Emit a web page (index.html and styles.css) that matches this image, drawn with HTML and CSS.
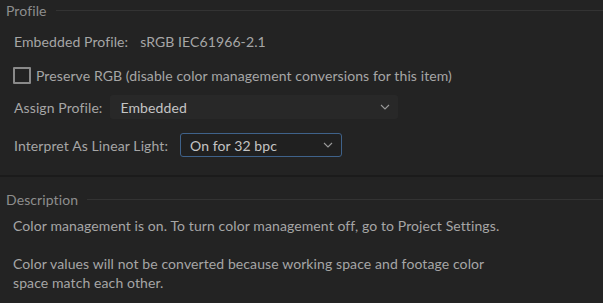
FILE: index.html
```html
<!DOCTYPE html>
<html lang="en">
<head>
  <meta charset="UTF-8">
  <title>Interpret Footage - Color</title>
  <link rel="stylesheet" href="styles.css">
</head>
<body>
  <section class="group profile">
    <div class="group-title">
      <span>Profile</span>
      <div class="rule"></div>
    </div>

    <div class="row info">
      <span class="label">Embedded Profile:</span>
      <span class="value">sRGB IEC61966-2.1</span>
    </div>

    <label class="row check">
      <span class="box"></span>
      <span>Preserve RGB (disable color management conversions for this item)</span>
    </label>

    <div class="row field">
      <span class="label">Assign Profile:</span>
      <div class="select wide">
        <span>Embedded</span>
        <svg class="chevron" width="10" height="6" viewBox="0 0 10 6"><path d="M1 1 L5 5 L9 1" fill="none" stroke="#9a9a9a" stroke-width="1.1"/></svg>
      </div>
    </div>

    <div class="row field">
      <span class="label">Interpret As Linear Light:</span>
      <div class="select narrow focused">
        <span>On for 32 bpc</span>
        <svg class="chevron" width="10" height="6" viewBox="0 0 10 6"><path d="M1 1 L5 5 L9 1" fill="none" stroke="#9a9a9a" stroke-width="1.1"/></svg>
      </div>
    </div>
  </section>

  <div class="divider"></div>

  <section class="group description">
    <div class="group-title">
      <span>Description</span>
      <div class="rule"></div>
    </div>
    <p>Color management is on. To turn color management off, go to Project Settings.</p>
    <p>Color values will not be converted because working space and footage color<br>space match each other.</p>
  </section>
</body>
</html>
```

FILE: styles.css
```css
body {
  margin: 0;
  background-color: #232323;
  color: #a6a6a6;
  font-family: Lato, "Noto Sans", sans-serif;
  font-size: 14px;
  letter-spacing: 0.1px;
  overflow: hidden;
}

.group-title {
  display: flex;
  align-items: center;
  height: 20px;
  padding-left: 6px;
  color: #8e8e8e;
  gap: 9px;
}

.group-title .rule {
  flex: 1;
  height: 1px;
  background-color: #333333;
}

.profile {
  padding-bottom: 18px;
}

.row {
  display: flex;
  align-items: center;
  padding-left: 14px;
}

.info {
  height: 20px;
  margin-top: 11px;
}

.info .value {
  margin-left: 12px;
}

.check {
  height: 20px;
  margin-top: 14px;
  padding-left: 13px;
  gap: 5px;
}

.check .box {
  width: 14px;
  height: 13px;
  border: 2px solid #8a8a8a;
  border-radius: 1px;
}

.field {
  height: 24px;
  margin-top: 10px;
}

.field + .field {
  margin-top: 14px;
}

.select {
  display: flex;
  align-items: center;
  justify-content: space-between;
  box-sizing: border-box;
  height: 24px;
  padding: 0 8px 0 10px;
  background-color: #282828;
  border-radius: 3px;
  color: #c4c4c4;
  margin-left: 8px;
}

.select.wide {
  width: 288px;
}

.select.narrow {
  width: 162px;
  margin-left: 12px;
}

.select.focused {
  border: 1px solid #3f628a;
  background-color: #202020;
  padding-left: 9px;
}

.divider {
  height: 2px;
  background-color: #1b1b1b;
}

.description {
  padding-top: 12px;
}

.description p {
  margin: 0;
  padding-left: 13px;
  line-height: 19px;
}

.description .group-title + p {
  margin-top: 7px;
}

.description p + p {
  margin-top: 19px;
}
```
